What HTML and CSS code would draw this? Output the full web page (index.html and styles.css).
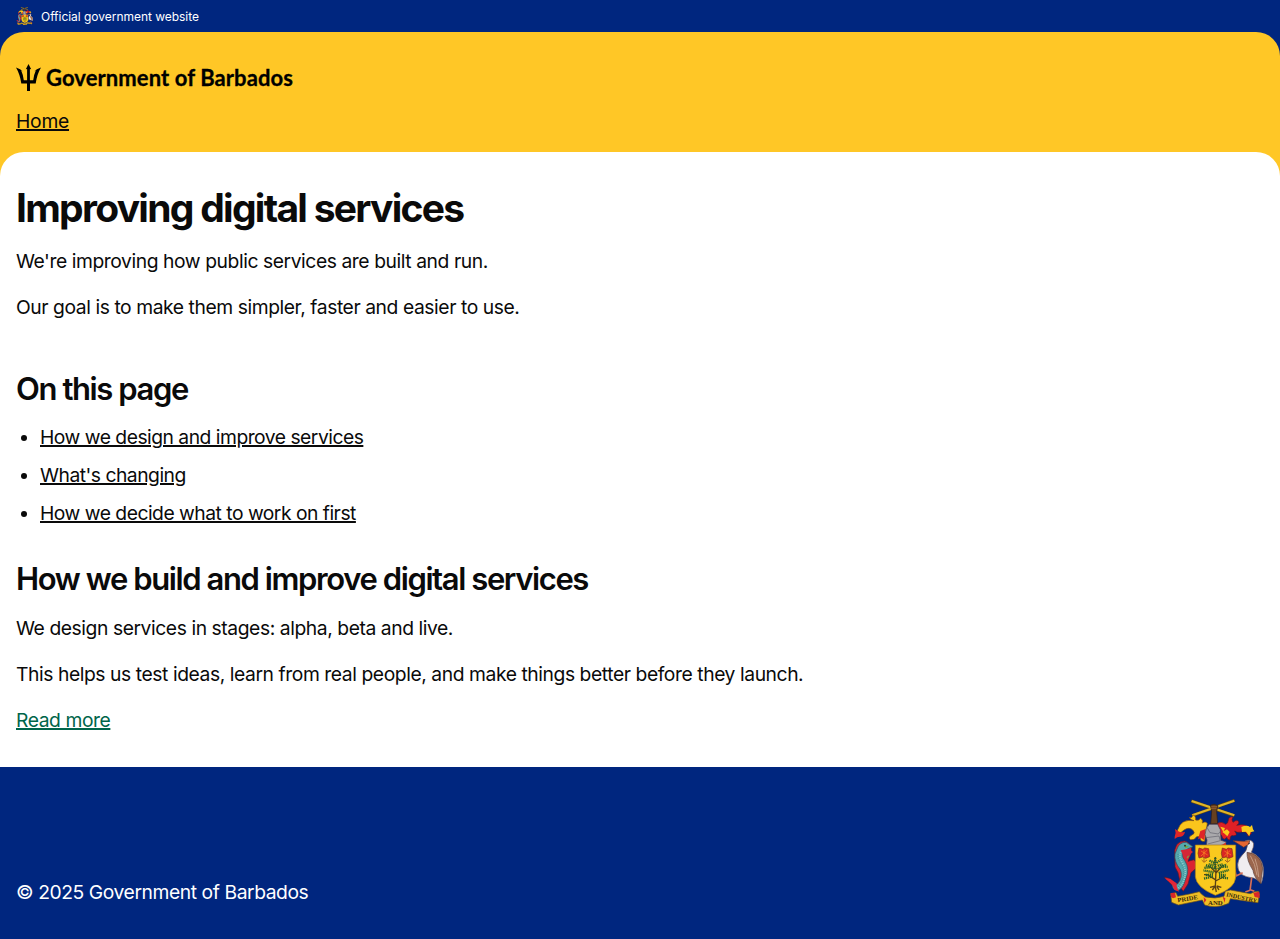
FILE: index.html
```html
<!DOCTYPE html>
<html lang="en">
<head>
<meta charset="utf-8">
<title>Improving digital services</title>
<link rel="stylesheet" href="styles.css">
</head>
<body>
<svg class="defs" aria-hidden="true">
  <symbol id="arms" viewBox="26 28 303 324">
    <!-- crest: crossed canes held in a hand -->
    <g stroke="#6b4b08" stroke-width="9"><path d="M111 34L240 78M241 32L113 78"/></g>
    <g stroke="#dfb52a" stroke-width="6.5"><path d="M112 34L240 77M240 33L114 77"/></g>
    <path d="M168 47q11-7 23 1l-4 17 3 37-21 1 3-39z" fill="#67401f" stroke="#291b18" stroke-width="2"/>
    <path d="M171 51h17M170 56h16" stroke="#ab7038" stroke-width="2"/>
    <!-- mantling -->
    <path d="M70 120q11-33 49-27-12-3-14-10 9 4 10-7 10 1 9 15 10 3 14-5 9 4 6 14 9-7 15 1l-8 54q-13 1-13-8-1-9-11-6-7 12-19 9-8-8 5-14 11-5 4-13-12-13-28-2-12 10-22 18z" fill="#fac51c" stroke="#7b4c11" stroke-width="2"/>
    <path d="M61 141q5-12 1-23l10 7q8 5 20 1-3 14-13 15-10-1-18 7zM138 124l16-6-4 34-10-7-9 4z" fill="#df2527"/>
    <path d="M190 101q12-7 24 3 7-2 8-12 2-13 14-10-6 9 0 16 7-7 14-5 8 6-3 14 28-7 41 10l3 15-10 8q-3-16-18-13-16 3-22-3 11 14-3 14-11-3-11 13-10-1-9-8-8 9-13 3-2-12-12-15z" fill="#df2026" stroke="#65191f" stroke-width="2"/>
    <path d="M261 112q17-7 26 0l6-6 3 13 4 6-12 3-3 12-10-14-12 1zM204 127l14-8 8 8-7 13-8-8zM198 111l14 4-5 12z" fill="#facb1c"/>
    <!-- helmet -->
    <path d="M165 104l25 0 8 16 2 32 16 5q-10 20-40 13l-21 5 3-24-6-16q1-21 13-31z" fill="#aaa9ac" stroke="#4e3d45" stroke-width="2"/>
    <path d="M159 115l8 14 25 4 6-8M155 144l39-5 4 14-38 10" fill="none" stroke="#62626d" stroke-width="2"/>
    <path d="M157 168q28 8 57-9l2 7H155z" fill="#df2527"/>
    <!-- dolphin -->
    <path d="M61 181l6-16q8-10 24-11l8 3 13 13-2 24-9 21 18-5 14 19-23 20-9 34-14 22-12-15-18 1-27-29 18 5 20 18 8-14-5-22-9-17z" fill="#da2332" stroke="#541b28" stroke-width="2"/>
    <path d="M68 178q7-21 28-20l20 13-15 6-11 9q-12 9 1 26 17 27 3 56-9 32-25 35-15-3-15-18l16-2q17-21 8-43-19-24-16-47z" fill="#54a8ae" stroke="#294e65" stroke-width="2"/>
    <path d="M79 187q-7 15 8 38 10 23 1 47-5 18-20 24" fill="none" stroke="#9dd3d5" stroke-width="6" stroke-dasharray="2 4"/>
    <path d="M71 194q-2 15 12 32 12 21-1 49l-11 18" fill="none" stroke="#377985" stroke-width="3" stroke-dasharray="2 4"/>
    <path d="M90 166l14 5-11 5zM91 188l14 10-6 9z" fill="#6faa42"/>
    <path d="M79 182l25-5 12 10-25 20z" fill="#d42736"/>
    <path d="M31 266l17 2 19 13q-2 13 8 25l-15-6-8-18z" fill="#e32638"/>
    <circle cx="92" cy="168" r="2.5" fill="#222"/>
    <!-- pelican -->
    <path d="M272 154q20-8 26 8 1 9-7 26 32 14 36 45 2 27-6 48-18-18-31-17-15-2-27-9-14-12-13-29 0-16 12-28 17-16 17-30-1-9-8-11z" fill="#f0edf0" stroke="#685252" stroke-width="2"/>
    <path d="M278 188q42 5 47 47l-6 47q-21-21-23-40-19-29-18-54z" fill="#9b664d" stroke="#573e3c" stroke-width="2"/>
    <path d="M288 198q15 24 20 59M302 207q9 24 11 55" stroke="#c49a83" stroke-width="3" fill="none"/>
    <path d="M236 153l34 2 16-2-2 10-16 10z" fill="#e56632" stroke="#60332e" stroke-width="2"/>
    <circle cx="284" cy="161" r="2" fill="#222"/>
    <path d="M265 249l-20 10-4-21M245 258l-8-5M292 264l-5 39M287 302l-14 5M288 300l12 5" fill="none" stroke="#d46e57" stroke-width="5"/>
    <!-- shield -->
    <path d="M123 166H244V263Q242 297 183 317 126 293 123 261z" fill="#fac91e" stroke="#a77919" stroke-width="2"/>
    <g id="flower" fill="#d92523" stroke="#75301d" stroke-width="2">
      <path d="M134 175l12 4 5-4 12 2 3 24-12 5-9-4-11 3-3-14z"/>
      <path d="M140 184l20 12M158 182l-18 17M149 180v22" stroke="#f98c22"/>
      <path d="M149 204v13M142 211l7 7 9-7" fill="none" stroke="#ad681c" stroke-width="3"/>
    </g>
    <use href="#flower" x="70"/>
    <!-- fig tree -->
    <g fill="none" stroke="#594116" stroke-width="4"><path d="M183 202q-3 21 2 38l-2 52 3 15M183 270l-24-15-10 0M184 274l28-15M184 248l-18-18M185 250l20-23M183 289l-9 12M183 289l-16 4M187 290l7 11M187 289l14 4"/></g>
    <g fill="none" stroke="#26602a" stroke-width="7" stroke-dasharray="4 2"><path d="M183 204v37M180 219l-16-7M187 219l17-11M181 236l-27-10M190 238l27-14M178 248l-31-6M193 250l31-9M176 260l-27 7M194 262l27 4M166 233l-18 2M206 230l14 2M178 226l-15-2M190 228l15-4M176 254l-22 2M194 256l20 0"/></g>
    <!-- motto scroll -->
    <path d="M49 312l16-3 5 11q38-7 65-14l7 8 11 8q31 7 56-2l4-15 15-4 60 11 14-6 10-1 3 9-4 25-22-3-61-9-5 14q-36 17-72 5l-7-15-72 15-20-8z" fill="#eebd24" stroke="#725417" stroke-width="2"/>
    <path d="M49 310l13-1 3 14-9 3-6-4zM297 309l18-3 1 19-15-3zM148 322l8 8-6 10zM205 321l8 5-2 13z" fill="#d92629"/>
    <g class="motto"><text x="70" y="338" transform="rotate(-9 70 338)" textLength="62" lengthAdjust="spacingAndGlyphs">PRIDE</text><text x="161" y="346" textLength="44" lengthAdjust="spacingAndGlyphs">AND</text><text x="215" y="320" transform="rotate(12 215 320)" textLength="94" lengthAdjust="spacingAndGlyphs">INDUSTRY</text></g>
  </symbol>
</svg>

<div class="official"><svg class="official-arms"><use href="#arms"/></svg><span class="official-text">Official government website</span></div>
<div class="header-wrap">
<header class="header">
  <div class="brand">
    <svg class="trident" viewBox="0 0 25 27"><path d="M12.5 0L15.2 5.3 13.9 4.9V16.2H17.2Q18 10.5 19.8 6.6L18 7.4Q20.4 5 25 3.5 21.1 10 19.7 19.4H14V27H11V19.4H5.3Q3.9 10 0 3.5 4.6 5 7 7.4L5.2 6.6Q7 10.5 7.8 16.2H11.1V4.9L9.8 5.3z"/></svg>
    <span class="brand-name">Government of Barbados</span>
  </div>
  <nav><a class="link home" href="#">Home</a></nav>
</header>
<main class="main">
  <h1 class="title">Improving digital services</h1>
  <p class="text">We're improving how public services are built and run.</p>
  <p class="text">Our goal is to make them simpler, faster and easier to use.</p>
  <h2 class="heading contents-heading">On this page</h2>
  <ul class="contents">
    <li><a class="link" href="#design">How we design and improve services</a></li>
    <li><a class="link" href="#changing">What's changing</a></li>
    <li><a class="link" href="#first">How we decide what to work on first</a></li>
  </ul>
  <h2 class="heading" id="design">How we build and improve digital services</h2>
  <p class="text">We design services in stages: alpha, beta and live.</p>
  <p class="text">This helps us test ideas, learn from real people, and make things better before they launch.</p>
  <p class="text"><a class="link more" href="#">Read more</a></p>
</main>
</div>
<footer class="footer"><span class="copyright">© 2025 Government of Barbados</span><svg class="footer-arms"><use href="#arms"/></svg></footer>
</body>
</html>
```
FILE: styles.css
```css
* { box-sizing: border-box; }
body { margin: 0; background: #00267f; color: #0a0a0a; font: 19.3px/30px Inter, "Liberation Sans", sans-serif; letter-spacing: -0.43px; }
.defs { display: none; }
.official { height: 32px; padding: 0 16px; display: flex; align-items: center; gap: 8px; color: #fff; font-size: 12px; line-height: 18px; letter-spacing: -0.03px; }
.official-text { padding-top: 2px; }
.official-arms { width: 17px; height: 18px; }
.header-wrap { background: #ffc726; border-radius: 24px 24px 0 0; }
.header { height: 120px; padding: 32px 16px 16px; display: flex; flex-direction: column; justify-content: space-between; }
.brand { height: 27px; display: flex; align-items: center; gap: 5px; color: #000; }
.trident { width: 25px; height: 27px; fill: #000; }
.brand-name { font: 700 22px/27px Lato, sans-serif; letter-spacing: 0.09px; -webkit-text-stroke: 0.3px #000; white-space: nowrap; }
.link { color: #0a0a0a; text-decoration: underline; text-decoration-thickness: 2px; text-underline-offset: 1px; }
.home { letter-spacing: -0.25px; }
.more { color: #00654a; }
.main { height: 615px; padding: 32px 16px; background: #fff; border-radius: 24px 24px 0 0; }
.title { margin: 0 0 16px; padding-top: 1px; font-size: 39px; line-height: 45px; font-weight: 700; letter-spacing: -1.72px; }
.text { margin: 0 0 16px; }
.heading { margin: 0 0 16px; padding-top: 1px; font-size: 31px; line-height: 36px; font-weight: 600; letter-spacing: -1.4px; }
.contents-heading { margin: 48px 0 15px; }
.contents { margin: 0 0 32px; padding-left: 24px; display: grid; gap: 8px; letter-spacing: -0.5px; }
.footer { height: 172px; padding: 32px 16px; display: flex; justify-content: space-between; align-items: flex-end; color: #fff; }
.footer-arms { width: 101px; height: 108px; }
.motto { font: 700 18px "Liberation Serif", serif; fill: #35280c; letter-spacing: 0; }
```
